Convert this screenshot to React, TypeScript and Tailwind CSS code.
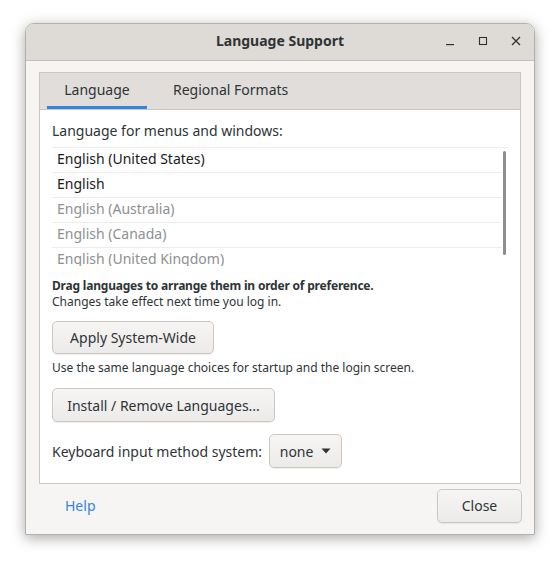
import React from "react";

const languages = [
  { name: "English (United States)", active: true },
  { name: "English", active: true },
  { name: "English (Australia)", active: false },
  { name: "English (Canada)", active: false },
  { name: "English (United Kingdom)", active: false },
];

function Button({ children, className = "" }: { children: React.ReactNode; className?: string }) {
  return (
    <button
      className={`flex items-center justify-center rounded-[5px] border border-[#cdc7c2] bg-gradient-to-b from-[#f6f5f4] to-[#edebe9] text-[14px] text-[#2e3436] shadow-[0_1px_1px_rgba(0,0,0,0.07)] ${className}`}
    >
      {children}
    </button>
  );
}

export default function App() {
  return (
    <div
      className="w-[560px] h-[564px] bg-white pt-[23px] pl-[25px]"
      style={{ fontFamily: '"Noto Sans", "Open Sans", sans-serif' }}
    >
      <div className="w-[510px] h-[512px] flex flex-col rounded-t-[9px] overflow-hidden border border-[#b6b0aa] shadow-[0_3px_14px_rgba(0,0,0,0.35)]">
        {/* Title bar */}
        <div className="h-[37px] shrink-0 grid grid-cols-[1fr_auto_1fr] items-center bg-[#dedad6] border-b border-[#c4bfba]">
          <div />
          <div className="text-[14px] font-bold text-[#2e3436] pb-[3px]">Language Support</div>
          <div className="flex justify-end items-center gap-[17px] pr-[10px] pb-[2px] text-[#2e3436]">
            <svg width="16" height="16" viewBox="0 0 16 16">
              <rect x="4" y="11" width="8" height="1.2" fill="currentColor" />
            </svg>
            <svg width="16" height="16" viewBox="0 0 16 16">
              <rect x="4.5" y="4.5" width="7" height="7" fill="none" stroke="currentColor" strokeWidth="1.1" />
            </svg>
            <svg width="16" height="16" viewBox="0 0 16 16">
              <path d="M4 4L12 12M12 4L4 12" stroke="currentColor" strokeWidth="1.3" />
            </svg>
          </div>
        </div>

        {/* Body */}
        <div className="flex-1 flex flex-col bg-[#f6f5f4] px-[13px] pt-[11px]">
          <div className="h-[412px] flex flex-col border border-[#cdc7c2]">
            {/* Tabs */}
            <div className="h-[37px] shrink-0 flex bg-[#e0ddda] border-b border-[#cdc7c2] pl-[7px] text-[14px] text-[#2e3436]">
              <div className="w-[100px] flex items-center justify-center border-b-[3px] border-[#3584e4] pb-[1px]">Language</div>
              <div className="px-[26px] flex items-center pb-[3px]">Regional Formats</div>
            </div>

            {/* Content */}
            <div className="flex-1 bg-white px-[12px] pt-[12px] text-[#2e3436]">
              <div className="text-[14px] leading-[18px]">Language for menus and windows:</div>
              <div className="mt-[7px] h-[119px] overflow-hidden flex border-t border-[#eeecea]">
                <div className="flex-1">
                  {languages.map((l) => (
                    <div
                      key={l.name}
                      className={`h-[25px] flex items-center pl-[5px] pb-[3px] border-b border-[#eeecea] text-[14px] ${l.active ? "text-[#1a1a1a]" : "text-[#8d9091]"}`}
                    >
                      {l.name}
                    </div>
                  ))}
                </div>
                <div className="w-[4px] pt-[3px] ml-[1px] mr-[1px]">
                  <div className="h-[104px] w-[3px] rounded-full bg-[#8d8d8d]" />
                </div>
              </div>

              <div className="mt-[12px] text-[12px] leading-[16px]">
                <div className="font-bold tracking-[-0.2px]">Drag languages to arrange them in order of preference.</div>
                <div>Changes take effect next time you log in.</div>
              </div>

              <Button className="mt-[11px] w-[162px] h-[33px]">Apply System-Wide</Button>

              <div className="mt-[6px] text-[12px] leading-[15px]">Use the same language choices for startup and the login screen.</div>

              <Button className="mt-[13px] w-[223px] h-[34px]">Install / Remove Languages...</Button>

              <div className="mt-[12px] flex items-center gap-[7px]">
                <span className="text-[14px]">Keyboard input method system:</span>
                <Button className="w-[73px] h-[34px] gap-[8px]">
                  <span>none</span>
                  <svg width="10" height="6" viewBox="0 0 10 6">
                    <path d="M0.5 0.5H9.5L5 5.5Z" fill="#2e3436" />
                  </svg>
                </Button>
              </div>
            </div>
          </div>

          {/* Footer */}
          <div className="mt-[5px] flex items-center justify-between">
            <span className="pl-[26px] pb-[2px] text-[14px] text-[#3584e4]">Help</span>
            <Button className="w-[85px] h-[34px] mr-[-1px] pb-[2px]">Close</Button>
          </div>
        </div>
      </div>
    </div>
  );
}
